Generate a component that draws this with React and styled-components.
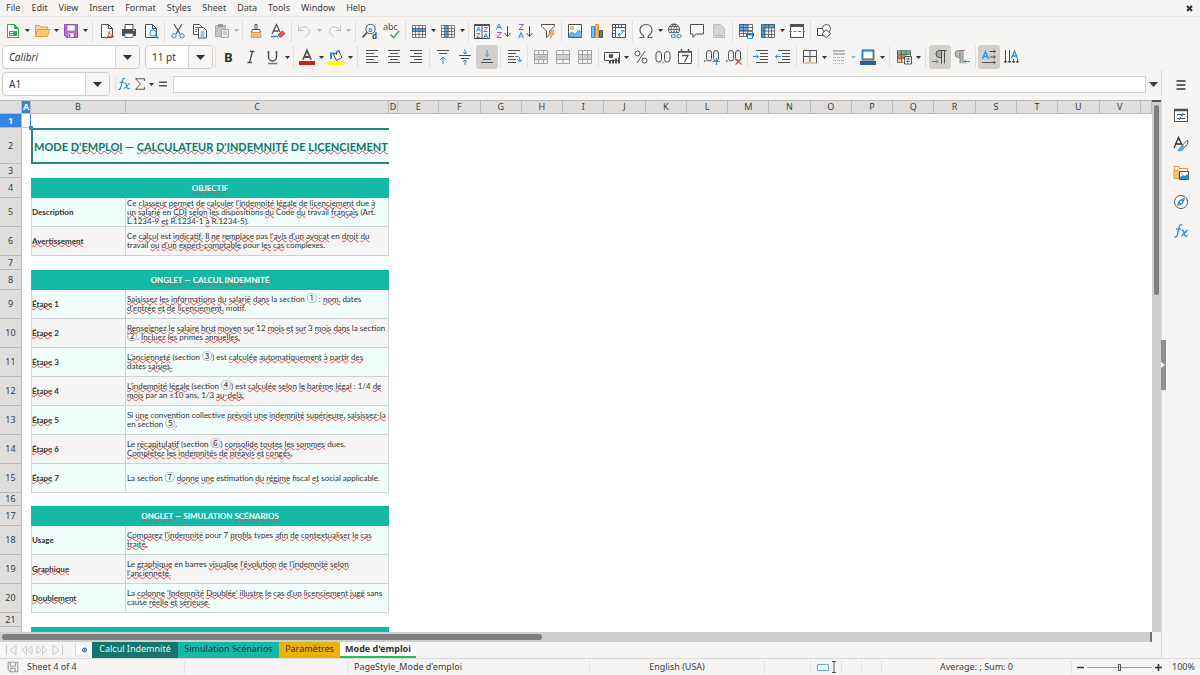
import React, { Fragment, useState } from "react";
import styled, { createGlobalStyle, css } from "styled-components";

const Colors = {
    chrome: "#f6f5f4",
    line: "#dcdad8",
    text: "#3a3d3e",
    ink: "#4d4f50",
    blue: "#2a8fd8",
    header: "#dfdedd",
    headerLine: "#bdbcbb",
    select: "#3584e4",
    teal: "#14b8a6",
    darkTeal: "#0f766e",
    mint: "#f0fdfa",
    grey: "#f5f5f5",
};

const K = Colors.ink;
const B = Colors.blue;

// ---------- data ----------
// words that start with ~ carry a spelling mark
const ROWS = [
    { n: 1, h: 14, kind: "empty" },
    { n: 2, h: 36, kind: "title", text: "MODE ~D'EMPLOI — ~CALCULATEUR ~D'INDEMNITÉ DE ~LICENCIEMENT" },
    { n: 3, h: 14, kind: "empty" },
    { n: 4, h: 20, kind: "section", text: "~OBJECTIF" },
    {
        n: 5,
        h: 29,
        label: "Description",
        text: "Ce ~classeur ~permet ~de ~calculer ~l'indemnité ~légale ~de ~licenciement due ~à\n~un ~salarié en ~CDI ~selon ~les dispositions ~du Code ~du travail ~français (Art.\nL.1234-9 ~et R.1234-1 ~à R.1234-5).",
    },
    {
        n: 6,
        h: 29,
        label: "~Avertissement",
        text: "Ce ~calcul est ~indicatif. ~Il ~ne ~remplace pas ~l'avis ~d'un ~avocat en ~droit ~du\ntravail ~ou ~d'un ~expert-comptable pour ~les ~cas complexes.",
    },
    { n: 7, h: 14, kind: "empty" },
    { n: 8, h: 20, kind: "section", text: "~ONGLET — ~CALCUL ~INDEMNITÉ" },
    {
        n: 9,
        h: 29,
        label: "~Étape 1",
        text: "~Saisissez ~les ~informations ~du ~salarié ~dans la section ① : ~nom, dates\n~d'entrée ~et ~de ~licenciement, motif.",
    },
    {
        n: 10,
        h: 29,
        label: "~Étape 2",
        text: "~Renseignez ~le ~salaire ~brut ~moyen ~sur 12 ~mois ~et ~sur 3 ~mois ~dans la section\n②. ~Incluez ~les primes ~annuelles.",
    },
    {
        n: 11,
        h: 29,
        label: "~Étape 3",
        text: "~L'ancienneté (section ③) est ~calculée ~automatiquement ~à ~partir ~des\ndates ~saisies.",
    },
    {
        n: 12,
        h: 29,
        label: "~Étape 4",
        text: "~L'indemnité ~légale (section ④) est ~calculée ~selon ~le ~barème ~légal : 1/4 ~de\n~mois par an ≤10 ans, 1/3 ~au-delà.",
    },
    {
        n: 13,
        h: 29,
        label: "~Étape 5",
        text: "Si ~une convention collective ~prévoit ~une ~indemnité ~supérieure, ~saisissez-la\nen section ⑤.",
    },
    {
        n: 14,
        h: 29,
        label: "~Étape 6",
        text: "Le ~récapitulatif (section ⑥) ~consolide ~toutes ~les ~sommes dues.\n~Complétez ~les ~indemnités ~de ~préavis ~et ~congés.",
    },
    {
        n: 15,
        h: 29,
        label: "~Étape 7",
        text: "La section ⑦ ~donne ~une estimation ~du ~régime fiscal ~et social applicable.",
    },
    { n: 16, h: 13, kind: "empty" },
    { n: 17, h: 20, kind: "section", text: "~ONGLET — SIMULATION ~SCÉNARIOS" },
    {
        n: 18,
        h: 29,
        label: "Usage",
        text: "~Comparez ~l'indemnité pour 7 ~profils types ~afin ~de ~contextualiser ~le ~cas\n~traité.",
    },
    {
        n: 19,
        h: 29,
        label: "~Graphique",
        text: "Le ~graphique en barres ~visualise ~l'évolution ~de ~l'indemnité ~selon\n~l'ancienneté.",
    },
    {
        n: 20,
        h: 29,
        label: "~Doublement",
        text: "La ~colonne ~'Indemnité ~Doublée' ~illustre ~le ~cas ~d'un ~licenciement ~jugé sans\ncause ~réelle ~et ~sérieuse.",
    },
    { n: 21, h: 14, kind: "empty" },
    { n: "", h: 20, kind: "section", text: "" },
];

const REST = "EFGHIJKLMNOPQRSTUV".split("");

const SHEETS = [
    { name: "Calcul Indemnité", bg: "#13766e", color: "#e8f5f3", width: 86 },
    { name: "Simulation Scénarios", bg: Colors.teal, color: "#12393a", width: 101 },
    { name: "Paramètres", bg: "#eab308", color: "#3d330f", width: 61 },
    { name: "Mode d'emploi", bg: "#ffffff", color: "#2e3436", width: 76 },
];

// ---------- icons ----------
const Page = ({ fill = "#fff", stroke = K }) => <path d="M2.5 1.5h7l4 4v9h-11zM9.500 1.500v4h4" fill={fill} stroke={stroke} />;
const Lines = ({ list, color = K }) => <path d={list.map(([x, y, w]) => `M${x} ${y}h${w}`).join("")} stroke={color} />;
const GridBox = ({ color = K }) => <path d="M1.500 2.500h13v12h-13zM1.500 5.500h13M1.500 8.500h13M1.500 11.500h13M4.500 2.500v12M8 2.500v12M11.500 2.500v12" stroke={color} strokeWidth='.7' fill="none" />;
const T = ({ x, y, s = 8, c = K, b, i, children }) => (
    <text x={x} y={y} fontSize={s} fill={c} stroke='none' fontWeight={b ? 700 : 400} fontStyle={i ? "italic" : "normal"} fontFamily="'Noto Sans', sans-serif">
        {children}
    </text>
);

const ICONS = {
    create: (
        <g>
            <path d="M2.500 1.500h7l4 4v9h-11z" fill='#fff' stroke='#35a854' />
            <path d="M9.500 1.500v4h4z" fill='#35a854' stroke='#35a854' />
            <path d="M4 8h8v5H4z" fill='#35a854' stroke='none' />
            <path d="M5 9.500h3M5 11.500h3" stroke='#fff' />
        </g>
    ),
    open: (
        <g>
            <path d="M1.500 13.500v-11h4l1 1.500h7v3" fill='#fbd9a0' stroke='#e39a3c' />
            <path d="M1.500 13.500l2-7h12l-2 7z" fill='#fbc877' stroke='#e39a3c' />
        </g>
    ),
    save: (
        <g>
            <path d="M1.500 1.500h13v13h-11l-2-2z" fill='#c06fd0' stroke='#9b4fb0' />
            <path d="M4 2h8v6H4z" fill='#fff' stroke='#9b4fb0' strokeWidth='.6' />
            <path d="M5 10h6v4.500H5z" fill='#fff' stroke='#9b4fb0' strokeWidth='.6' />
            <path d="M6.500 11v3" stroke='#9b4fb0' strokeWidth='1.500' />
        </g>
    ),
    pdf: (
        <g>
            <Page />
            <path d="M7 15c2-1 3.500-4 3-6.500 1 3 2.500 4.500 5 5-3-.6-6 0-8 1.500z" fill='#fff' stroke='#e0444f' />
        </g>
    ),
    print: (
        <g>
            <path d="M4 1.500h8v5H4z" fill='#fff' stroke={K} />
            <path d="M1 6h14v7H1z" fill={K} stroke='none' />
            <path d="M4 10.500h8v4H4z" fill='#fff' stroke={B} />
            <path d="M12 7.500h1.500" stroke='#fff' />
        </g>
    ),
    preview: (
        <g>
            <Page />
            <circle cx='10' cy='10' r='3.200' fill='#e3f1fb' stroke={B} />
            <path d="M12.500 12.500l3 3" stroke={B} strokeWidth='1.500' />
        </g>
    ),
    cut: (
        <g>
            <path d="M4 1l6 10M12 1L6 11" stroke={K} strokeWidth='1.200' />
            <circle cx='4' cy='12.800' r='2.200' fill='none' stroke={B} />
            <circle cx='12' cy='12.800' r='2.200' fill='none' stroke={B} />
        </g>
    ),
    copy: (
        <g>
            <path d="M1.500 1.500h6l2 2v8h-8z" fill='#fff' stroke={K} />
            <path d="M6.500 4.500h5l3 3v7.500h-8z" fill='#fff' stroke={K} />
            <path d="M3 4.500h3M3 6.500h2M3 8.500h2M8.500 9h4M8.500 11h4M8.500 13h4" stroke={B} />
        </g>
    ),
    paste: (
        <g>
            <path d="M1.500 2.500h10v11h-10z" fill='#c6c5c4' stroke='#aaa' />
            <path d="M4 1h5v3H4z" fill='#999' stroke='none' />
            <path d="M7.500 6.500h7v8h-7z" fill='#eee' stroke='#aaa' />
            <path d="M9 9h4M9 11h4" stroke='#aaa' />
        </g>
    ),
    brush: (
        <g>
            <path d="M7 1.500h2v5H7z" fill='none' stroke={K} />
            <path d="M4.500 6.500h7l1 3h-9z" fill='#fff' stroke={K} />
            <path d="M3.500 9.500h9l.5 5H3z" fill='#f9c480' stroke='#e39a3c' />
            <path d="M6 14v-2M9.500 14v-2" stroke='#e39a3c' />
        </g>
    ),
    clear: (
        <g>
            <path d="M2 11L6.500 1.500 10 9M3.500 8h5" fill='none' stroke={K} strokeWidth='1.300' />
            <path d="M1 13.500h7" stroke={B} strokeWidth='1.500' />
            <path d="M8 12l4.500-4 2.500 2.500-4.500 4z" fill='#e8505b' stroke='#c93440' />
        </g>
    ),
    undo: <path d="M1.500 2.500v5h5M1.500 7.500C4 3.500 9 2.500 11.500 5.500c2.500 3 0 6-3.500 8.500" fill='none' stroke='#c2c1c0' />,
    redo: <path d="M14.500 2.500v5h-5M14.500 7.500C12 3.500 7 2.500 4.500 5.500c-2.500 3 0 6 3.500 8.500" fill='none' stroke='#c2c1c0' />,
    find: (
        <g>
            <circle cx='8.500' cy='6' r='4.700' fill='#fff' stroke={K} />
            <path d="M5 9.500l-4.500 5" stroke={K} strokeWidth='1.800' />
            <T x={6} y={8.5} s={7} c={B} b>a</T>
            <T x={10} y={15.5} s={8} b>d</T>
        </g>
    ),
    spell: (
        <g>
            <T x={-1} y={7} s={9}>abc</T>
            <path d="M6.500 11.500l3 3L15 8" fill='none' stroke='#37b26a' strokeWidth='1.700' />
        </g>
    ),
    row: (
        <g>
            <path d="M1 5h14v4H1z" fill='#5aaee8' stroke='none' />
            <GridBox />
        </g>
    ),
    column: (
        <g>
            <path d="M4.500 2h4v13h-4z" fill='#5aaee8' stroke='none' />
            <GridBox />
        </g>
    ),
    sort: (
        <g>
            <path d="M.5 1.500h15v14H.5zM8 1.500v14" fill='#fff' stroke={K} />
            <path d="M.5 2h15" stroke={K} strokeWidth='2' />
            <path d="M2.500 8.500l2-4.500 2 4.500M3.200 7h2.600M9.800 15l2-4.500 2 4.500M10.500 13.500h2.600" fill='none' stroke={B} />
            <path d="M2.500 10.500h3.500l-3.500 4h3.500M10 4.500h3.500l-3.500 4h3.500" fill='none' stroke='#b14ec4' />
        </g>
    ),
    sortAsc: (
        <g>
            <path d="M.5 6.500L3 1l2.500 5.500M1.500 4.500h3" fill='none' stroke={B} />
            <path d="M1 9.500h4.500L1 14.500h4.500" fill='none' stroke='#b14ec4' />
            <path d="M11.500 3v10M8.500 10l3 3.500 3-3.500" fill='none' stroke={K} />
        </g>
    ),
    sortDesc: (
        <g>
            <path d="M1 1.500h4.500L1 6.500h4.500" fill='none' stroke='#b14ec4' />
            <path d="M.5 15L3 9.500 5.500 15M1.500 13h3" fill='none' stroke={B} />
            <path d="M11.500 3v10M8.500 10l3 3.500 3-3.500" fill='none' stroke={K} />
        </g>
    ),
    filter: (
        <g>
            <path d="M1.500 1.500h13v1.500L9.500 8v4l-3 2.500V8l-5-5z" fill='#fff' stroke={K} />
            <path d="M12 7l-3 4.500h2.500L10 15.500l4.500-5.500h-2.500l2-3z" fill='#f9b25c' stroke='#ea9130' strokeWidth='.7' />
        </g>
    ),
    image: (
        <g>
            <path d="M1.500 1.500h13v13h-13z" fill='#fff' stroke={K} />
            <path d="M2 11l3-2 3 2 4-4 2.500 3v4H2z" fill='#6ab7ea' stroke={B} strokeWidth='.7' />
            <circle cx='5' cy='5' r='1.500' fill='#f9b25c' stroke='#ea9130' strokeWidth='.6' />
        </g>
    ),
    chart: (
        <g>
            <path d="M2.500 3.500h3v11h-3z" fill='#7fc0ee' stroke={B} />
            <path d="M6.500 1.500h3v13h-3z" fill='#f9b25c' stroke='#ea9130' />
            <path d="M10.500 7.500h3v7h-3z" fill='#777' stroke={K} />
        </g>
    ),
    pivot: (
        <g>
            <path d="M1.500 1.500h13v13h-13zM1.500 4.500h13M4.500 1.500v13" fill='#fff' stroke={K} />
            <path d="M7.500 1.500v3M10.500 1.500v3M1.500 7.500h3M1.500 10.500h3" stroke={K} strokeWidth='.8' />
            <path d="M7 12c3 0 5-2 5-5M7 12l2-2M7 12l2 1.500M12 7l-2 1.500M12 7l1.500 2" fill='none' stroke={B} />
        </g>
    ),
    omega: <path d="M1.500 14.500h4.200v-1.700C3.500 11.500 2 9.500 2 7c0-3.300 2.600-5.500 6-5.500S14 3.700 14 7c0 2.500-1.500 4.500-3.700 5.800v1.700h4.200" fill='none' stroke={K} strokeWidth='1.100' />,
    link: (
        <g>
            <circle cx='7' cy='6.500' r='5.500' fill='#fff' stroke={K} />
            <path d="M1.500 6.500h11M7 1v11M7 1C3 4 3 9 7 12M7 1c4 3 4 8 0 11M2.500 3.500h9M2.500 9.500h9" fill='none' stroke={K} strokeWidth='.8' />
            <path d="M3 10h12v6H3z" fill={Colors.chrome} stroke='none' />
            <path d="M8.500 11.500H5.800a1.500 1.500 0 000 3h2.700M10 11.500h2.700a1.500 1.500 0 010 3H10M7 13h4.500" fill='none' stroke={B} />
        </g>
    ),
    comment: <path d="M1.500 1.500h13v9.500H7l-3 3.500V11H1.500z" fill='#fff' stroke={K} />,
    footer: (
        <g>
            <path d="M2.500 1.500h7l4 4v9h-11z" fill='#d5d4d3' stroke='#c0bfbe' />
            <path d="M4.500 12.500h7" stroke='#aaa' />
        </g>
    ),
    printArea: (
        <g>
            <path d="M1 1h9v8H1z" fill='#5aaee8' stroke='none' />
            <path d="M1.500 1.500h13v12h-13zM1.500 4.500h13M1.500 7.500h13M1.500 10.500h13M5.500 1.500v12M10 1.500v12" fill='none' stroke={K} strokeWidth='.8' />
            <path d="M8 10h8v3.500H8z" fill={K} stroke='none' />
            <path d="M9.500 8.500h5v2h-5zM9.500 12h5v3.500h-5z" fill='#fff' stroke={B} />
        </g>
    ),
    freeze: (
        <g>
            <path d="M1 1h4v14H1zM1 1h14v4H1z" fill='#4aa3e2' stroke='none' />
            <path d="M1.500 1.500h13v13h-13zM1.500 5h13M1.500 8h13M1.500 11.500h13M5 1.500v13M8.500 1.500v13M11.500 5v9.500" fill='none' stroke={K} strokeWidth='.8' />
        </g>
    ),
    split: (
        <g>
            <path d="M1.500 2.500h13v12h-13z" fill='#fff' stroke={K} />
            <path d="M1 2.500h14" stroke={K} strokeWidth='3' />
            <path d="M0 8.500h16" stroke={B} strokeDasharray='3 1.500' />
        </g>
    ),
    shapes: (
        <g>
            <path d="M1.500 5.500h7v7h-7z" fill='#fff' stroke={K} />
            <circle cx='10.500' cy='5.500' r='4' fill='#fff' stroke={K} />
            <path d="M10 6.500l4.500 4-4 4.500-4.500-4z" fill='#fff' stroke={K} />
        </g>
    ),
    bold: <T x={3} y={13} s={13} c='#2e3436' b>B</T>,
    italic: <path d="M7 2.500h4.500M4.500 13.500H9M9.500 2.500l-3 11" stroke={K} strokeWidth='1.300' />,
    underline: (
        <g>
            <path d="M3.500 2v6a4 4 0 008 0V2" fill='none' stroke={K} strokeWidth='1.500' />
            <path d="M3 14.500h9.500" stroke={B} strokeWidth='1.500' />
        </g>
    ),
    fontColor: (
        <g>
            <path d="M4 10.500L8 1.500l4 9M5.500 8h5" fill='none' stroke={K} strokeWidth='1.800' />
            <path d="M0 12h16v4H0z" fill='#c9211e' stroke='none' />
        </g>
    ),
    fill: (
        <g>
            <path d="M5.500 5.500l5.500-3 3 6-5.500 3z" fill='#fff' stroke={K} />
            <path d="M8.500 6c-1-5 3-6 3.500-3" fill='none' stroke={K} />
            <path d="M3 10V4.500h4" fill='none' stroke={B} strokeWidth='2' />
            <path d="M0 12h16v4H0z" fill='#ffff00' stroke='none' />
        </g>
    ),
    left: <Lines list={[[2, 1.5, 12], [2, 4.5, 8], [2, 7.5, 12], [2, 10.5, 8], [2, 13.5, 12]]} />,
    center: <Lines list={[[2, 1.5, 12], [4, 4.5, 8], [2, 7.5, 12], [4, 10.5, 8], [2, 13.5, 12]]} />,
    right: <Lines list={[[2, 1.5, 12], [6, 4.5, 8], [2, 7.5, 12], [6, 10.5, 8], [2, 13.5, 12]]} />,
    top: (
        <g>
            <Lines list={[[2, 1.5, 12], [4, 4.5, 8]]} />
            <path d="M8 15V8M5.500 10.500L8 8l2.500 2.500" fill='none' stroke={B} />
        </g>
    ),
    middle: (
        <g>
            <Lines list={[[2, 6.5, 12], [4, 9.5, 8]]} />
            <path d="M8 0v5M6 3l2 2 2-2M8 16v-5M6 13l2-2 2 2" fill='none' stroke={B} />
        </g>
    ),
    bottom: (
        <g>
            <Lines list={[[2, 13.5, 12], [4, 10.5, 8]]} />
            <path d="M8 1v6.500M6 5.500l2 2 2-2" fill='none' stroke={B} />
        </g>
    ),
    wrap: (
        <g>
            <Lines list={[[2, 1.5, 12], [2, 4.5, 8], [2, 7.5, 6], [2, 10.5, 8], [2, 13.5, 8]]} />
            <path d="M9 7.500h3.500q1.500 0 1.500 5M11.500 10.500l2.500 2.500 2-2.500" fill='none' stroke={B} />
        </g>
    ),
    merge: (
        <g>
            <path d="M1 5h14v6H1z" fill='#d2d1d0' stroke='none' />
            <path d="M1.500 1.500h13v13h-13zM1.500 5.500h13M1.500 10.500h13M5.500 1.500v4M10.500 1.500v4M5.500 10.500v4M10.500 10.500v4M4 8h8" fill='none' stroke='#a5a4a3' />
        </g>
    ),
    mergeCells: (
        <g>
            <path d="M1 5h14v6H1z" fill='#d2d1d0' stroke='none' />
            <path d="M1.500 1.500h13v13h-13zM1.500 5.500h13M1.500 10.500h13M8 1.500v4M8 10.500v4" fill='none' stroke='#a5a4a3' />
        </g>
    ),
    splitCells: (
        <g>
            <path d="M1 5h14v6H1z" fill='#d2d1d0' stroke='none' />
            <path d="M1.500 1.500h13v13h-13zM1.500 5.500h13M1.500 10.500h13M5.500 1.500v13M10.500 1.500v13" fill='none' stroke='#a5a4a3' />
        </g>
    ),
    currency: (
        <g>
            <path d="M.5 3.500h15v8H.5z" fill='#fff' stroke={K} />
            <circle cx='7' cy='7' r='2.300' fill={K} stroke='none' />
            <path d="M6 14.500v-3M9 14.500v-4M12 14.500v-5M15 14.500v-6" stroke={K} strokeWidth='2' />
        </g>
    ),
    percent: (
        <g>
            <circle cx='4.500' cy='4.500' r='2.500' fill='none' stroke={K} />
            <circle cx='11.500' cy='11.500' r='2.500' fill='none' stroke={K} />
            <path d="M12 2L4 14" stroke={K} />
        </g>
    ),
    number: (
        <g>
            <rect x='1' y='2.500' width='5.500' height='10.500' rx='2.700' fill='none' stroke={K} />
            <rect x='9.500' y='2.500' width='5.500' height='10.500' rx='2.700' fill='none' stroke={K} />
            <path d="M7.500 13.500h1" stroke={K} strokeWidth='1.500' />
        </g>
    ),
    date: (
        <g>
            <path d="M1.500 2.500h13v12h-13z" fill='#fff' stroke={K} />
            <path d="M1 3h14M4.500 0v3M11.500 0v3" stroke={K} strokeWidth='1.500' />
            <path d="M5 6.500h6L7.500 13" fill='none' stroke={K} strokeWidth='1.300' />
        </g>
    ),
    addDecimal: (
        <g>
            <rect x='2.500' y='1.500' width='5' height='10.500' rx='2.500' fill='none' stroke={K} />
            <rect x='9.500' y='1.500' width='5' height='10.500' rx='2.500' fill='none' stroke={K} />
            <path d="M0 12h1.500" stroke={K} strokeWidth='1.500' />
            <path d="M9 12.500h7M12.500 9v7" stroke={B} strokeWidth='1.200' />
        </g>
    ),
    delDecimal: (
        <g>
            <rect x='2.500' y='1.500' width='5' height='10.500' rx='2.500' fill='none' stroke={K} />
            <rect x='9.500' y='1.500' width='5' height='10.500' rx='2.500' fill='none' stroke={K} />
            <path d="M0 12h1.500" stroke={K} strokeWidth='1.500' />
            <path d="M9.500 9.500l6 6M15.500 9.500l-6 6" stroke='#e0444f' strokeWidth='1.200' />
        </g>
    ),
    indent: (
        <g>
            <Lines list={[[3, 1.5, 12], [7, 4.5, 8], [7, 7.5, 8], [7, 10.5, 8], [3, 13.5, 12]]} />
            <path d="M0 7.500h5.500M3.500 5.500l2 2-2 2" fill='none' stroke={B} />
        </g>
    ),
    outdent: (
        <g>
            <Lines list={[[3, 1.5, 12], [7, 4.5, 8], [7, 7.5, 8], [7, 10.5, 8], [3, 13.5, 12]]} />
            <path d="M.5 7.500H6M2.500 5.500l-2 2 2 2" fill='none' stroke={B} />
        </g>
    ),
    borders: (
        <g>
            <path d="M1.500 14V1.500h13V14M8 1.500v12M1.500 7.500h13" fill='none' stroke={K} />
            <path d="M1 14h14" stroke='#ea9a4a' />
        </g>
    ),
    borderStyle: (
        <g>
            <path d="M2 2h12M2 5h12" stroke='#a5a4a3' strokeWidth='1.500' />
            <path d="M2 8.500h12M2 11.500h12" stroke='#b5b4b3' strokeDasharray='3 1' />
            <path d="M2 14.500h12" stroke='#b5b4b3' strokeDasharray='1 1' />
        </g>
    ),
    borderColor: (
        <g>
            <path d="M2.500 1.500h11v9h-11z" fill='#fff' stroke={K} strokeWidth='1.800' />
            <path d="M2.500 1.500h11v9h-11z" stroke={B} />
            <path d="M0 12h16v4H0z" fill='#2a6099' stroke='none' />
        </g>
    ),
    conditional: (
        <g>
            <path d="M1 2h14v3.500H1z" fill='#5cc47c' stroke='none' />
            <path d="M1 5.500h8v3.500H1z" fill='#ef6a62' stroke='none' />
            <path d="M1 9h6v4H1z" fill='#f9c480' stroke='none' />
            <path d="M14.500 7V1.500h-13v12h6M1.500 5.500h13M1.500 9.500h7M5.500 1.500v12M10 1.500v6" fill='none' stroke={K} strokeWidth='.7' />
            <path d="M8.500 7.500h7v7.500h-7z" fill='#fff' stroke={K} />
            <path d="M10 10h4M10 12.500h4M13 8.500l-2 5.500" stroke={K} strokeWidth='.8' />
        </g>
    ),
    ltr: (
        <g>
            <path d="M9 1.500H7.500a3.500 3.500 0 000 7H9z" fill='#aaa' stroke='none' />
            <path d="M14.500 1.500H7.500a3.500 3.500 0 000 7h2M9.500 1.500v13M12.500 1.500v13" fill='none' stroke={K} />
            <path d="M0 12.500h6M4 10.500l2 2-2 2" fill='none' stroke={B} />
        </g>
    ),
    rtl: (
        <g>
            <path d="M6 1.500H4.500a3.500 3.500 0 000 7H6zM6 2h3v12H6z" fill='#bbb' stroke='none' />
            <path d="M11 1.500H4.500a3.500 3.500 0 000 7H6M6 1.500v13M9 1.500v13" fill='none' stroke='#888' />
            <path d="M10 12.500h6M12 10.500l-2 2 2 2" fill='none' stroke={B} />
        </g>
    ),
    textHorizontal: (
        <g>
            <path d="M1.500 10L4.500 2.500 7.500 10M2.500 7.500h4" fill='none' stroke={B} strokeWidth='1.300' />
            <path d="M8.500 2.500H14M8.500 8H14M1 13.500h13M12.500 1l2 1.500-2 1.500M12.500 6.500l2 1.500-2 1.500M12.500 12l2 1.500-2 1.500" fill='none' stroke={K} />
        </g>
    ),
    textVertical: (
        <g>
            <path d="M8.500 9.500L11.500 2l3 7.500M9.500 7h4" fill='none' stroke={B} strokeWidth='1.300' />
            <path d="M2.500 1v12.500M6.500 1v12.500M10.500 10v3.500M14.500 10v3.500M1 12l1.500 2L4 12M5 12l1.500 2L8 12M9 12l1.500 2 1.500-2M13 12l1.500 2 1.500-2" fill='none' stroke={K} />
        </g>
    ),
    fx: (
        <g>
            <path d="M9 2.200C7.800 1 6.600 1.800 6.200 3.800L4.300 12c-.4 2-1.500 2.600-2.800 1.700M3 6.200h5" fill='none' stroke={B} strokeWidth='1.300' />
            <path d="M8.500 7.500c2-1 2 .5 2.500 3s1.500 3.500 3.500 2M15 7.500c-2-.5-5.500 6-7 5.500" fill='none' stroke={B} strokeWidth='1.300' />
        </g>
    ),
    sigma: <path d="M13 4.500v-2.500H3l5.500 6L3 14h10v-2.500" fill='none' stroke={K} strokeWidth='1.100' />,
    equals: <path d="M3.500 6h9M3.500 10h9" stroke={K} strokeWidth='1.800' />,
    menu: <path d="M3.500 4h9M3.500 8h9M3.500 12h9" stroke='#2e3436' strokeWidth='1.500' />,
    properties: (
        <g>
            <path d="M1.500 2.500h13v12h-13z" fill='#fff' stroke={K} />
            <path d="M1 3h14" stroke={K} strokeWidth='2.500' />
            <path d="M4 7.500h8M4 11.500h8" stroke={K} />
            <path d="M10 6L8 9h2M6 13l2-3.500" fill='none' stroke={B} />
        </g>
    ),
    styles: (
        <g>
            <path d="M1 12L5.500 1.500 9 9M2.500 8h6" fill='none' stroke='#2e3436' strokeWidth='1.400' />
            <path d="M15 4.500c-2 .5-4.500 3-5.500 5.500l1.500 1.500c2.500-1.500 4.500-4.500 4-7z" fill='#fff' stroke={K} />
            <path d="M9 10.500c-2 0-2 2.500-4 4 2.500.5 5.500 0 5.500-2.500z" fill='#6ab7ea' stroke={B} />
        </g>
    ),
    gallery: (
        <g>
            <path d="M1.500 12.500v-11h4l1 2h8v3" fill='#fff' stroke='#e39a3c' strokeWidth='1.200' />
            <path d="M1 5.500h5v8H1z" fill='#fbc877' stroke='#e39a3c' />
            <path d="M6.500 6.500h9v8h-9z" fill='#fff' stroke={K} />
            <path d="M7 12l3-2 2 1 2-2 1.500 2v3H7z" fill={B} stroke='none' />
            <circle cx='9' cy='8.500' r='.9' fill='#f9b25c' stroke='none' />
        </g>
    ),
    navigator: (
        <g>
            <circle cx='8' cy='8' r='6.500' fill='#fff' stroke={K} />
            <path d="M11.500 4.500L9.500 9.500l-5 2 2-5z" fill={B} stroke={B} />
            <circle cx='8' cy='8' r='1.200' fill='#fff' stroke='none' />
        </g>
    ),
    disk: (
        <g>
            <path d="M2.500 2.500h11v11h-9l-2-2z" fill='none' stroke='#8a8988' />
            <path d="M5 3v4h6V3M5.500 13.500v-4h5v4" fill='none' stroke='#8a8988' />
        </g>
    ),
};

const Icon = ({ name, size = 16 }) => (
    <svg width={size} height={size} viewBox='0 0 16 16' fill='none' aria-hidden='true' overflow='visible'>
        {ICONS[name]}
    </svg>
);

const Caret = ({ big }) => (
    <svg width={big ? 9 : 5} height={big ? 5 : 3} viewBox='0 0 10 6' preserveAspectRatio='none' aria-hidden='true'>
        <path d='M0 0h10L5 6z' fill='currentColor' />
    </svg>
);

// "|" small gap, "||" wider gap, name+ has an arrow, name! is switched on, name- is disabled
const STANDARD =
    "create+ open+ save+ || pdf print preview | cut copy paste+- | brush clear | undo+- redo+- || find spell | row+ column+ | sort sortAsc sortDesc filter | image chart pivot | omega+ link comment footer- | printArea freeze+ split | shapes";
const FORMATTING =
    "| bold italic underline+ | fontColor+ fill+ || left center right | top middle bottom! | wrap | merge- mergeCells- splitCells- | currency+ percent number date | addDecimal delDecimal | indent outdent | borders+ borderStyle+- borderColor+ || conditional+ || ltr! rtl | textHorizontal! textVertical";

const Tools = ({ spec }) =>
    spec.split(" ").map((item, i) => {
        if (item[0] === "|") return <Separator key={i} $wide={item === "||"} />;
        const name = item.replace(/[+!-]/g, "");
        const off = item.includes("-");
        return (
            <Fragment key={i}>
                <ToolButton $on={item.includes("!")} disabled={off} aria-label={name}>
                    <Icon name={name} />
                </ToolButton>
                {item.includes("+") && (
                    <ArrowButton disabled={off} aria-label={`${name} options`}>
                        <Caret />
                    </ArrowButton>
                )}
            </Fragment>
        );
    });

const Combo = ({ label, value, width, italic }) => {
    const [text, setText] = useState(value);
    return (
        <ComboBox $width={width} $italic={italic}>
            <input aria-label={label} value={text} onChange={(e) => setText(e.target.value)} />
            <button aria-label={`${label} list`}>
                <Caret big />
            </button>
        </ComboBox>
    );
};

const Marked = ({ text }) =>
    text.split(/(\s|[①-⑦])/).map((word, i) => {
        if (word[0] === "~") return <Typo key={i}>{word.slice(1)}</Typo>;
        if (/[①-⑦]/.test(word)) return <Circled key={i}>{word}</Circled>;
        return <Fragment key={i}>{word}</Fragment>;
    });

const SheetRow = ({ row, band }) => {
    const first = row.n === 1;
    return (
        <Row $height={row.h}>
            <RowHead scope='row' $active={first}>
                {row.n}
            </RowHead>
            <td>{first && <Cursor />}</td>
            {row.kind === "title" && (
                <TitleCell colSpan={2}>
                    <Marked text={row.text} />
                </TitleCell>
            )}
            {row.kind === "section" && (
                <SectionCell colSpan={2}>
                    <Marked text={row.text} />
                </SectionCell>
            )}
            {row.kind === "empty" && <td colSpan={2} />}
            {!row.kind && (
                <Fragment>
                    <LabelCell $band={band}>
                        <Marked text={row.label} />
                    </LabelCell>
                    <BodyCell $band={band}>
                        <Marked text={row.text} />
                    </BodyCell>
                </Fragment>
            )}
            <td colSpan={20} />
        </Row>
    );
};

const App = () => {
    const [sheet, setSheet] = useState(3);
    const [zoom, setZoom] = useState(50);
    let band = 0;

    return (
        <Window>
            <GlobalStyle />
            <MenuBar>
                {["File", "Edit", "View", "Insert", "Format", "Styles", "Sheet", "Data", "Tools", "Window", "Help"].map((m) => (
                    <button key={m}>{m}</button>
                ))}
                <CloseButton aria-label='Close document'>
                    <svg width='7' height='7' viewBox='0 0 7 7' aria-hidden='true'>
                        <path d='M1 1l5 5M6 1L1 6' stroke='#2e3436' strokeWidth='2' />
                    </svg>
                </CloseButton>
            </MenuBar>
            <Toolbar>
                <Tools spec={STANDARD} />
            </Toolbar>
            <Toolbar>
                <Combo label='Font name' value='Calibri' width={138} italic />
                <Combo label='Font size' value='11 pt' width={68} />
                <Tools spec={FORMATTING} />
            </Toolbar>
            <Main>
                <Document>
                    <FormulaBar>
                        <Combo label='Name box' value='A1' width={108} />
                        <FormulaTools>
                            <SmallTool aria-label='Function wizard'>
                                <Icon name='fx' size={14} />
                            </SmallTool>
                            <SmallTool aria-label='Select function'>
                                <Icon name='sigma' size={14} />
                            </SmallTool>
                            <ArrowButton aria-label='Function list'>
                                <Caret />
                            </ArrowButton>
                            <SmallTool aria-label='Formula'>
                                <Icon name='equals' size={14} />
                            </SmallTool>
                        </FormulaTools>
                        <FormulaInput aria-label='Input line' />
                        <ExpandButton aria-label='Expand formula bar'>
                            <Caret big />
                        </ExpandButton>
                    </FormulaBar>
                    <SheetArea>
                        <Viewport>
                            <Sheet>
                                <colgroup>
                                    <Col $width={22} />
                                    <Col $width={9} />
                                    <Col $width={95} />
                                    <Col $width={263} />
                                    <Col $width={9} />
                                    {REST.map((c) => (
                                        <col key={c} />
                                    ))}
                                    <Col $width={11} />
                                </colgroup>
                                <thead>
                                    <tr>
                                        <ColHead />
                                        <ColHead scope='col' $active>
                                            A
                                        </ColHead>
                                        {["B", "C", "D", ...REST].map((c) => (
                                            <ColHead scope='col' key={c}>
                                                {c}
                                            </ColHead>
                                        ))}
                                        <ColHead />
                                    </tr>
                                </thead>
                                <tbody>
                                    {ROWS.map((row) => {
                                        band = row.kind ? 0 : band + 1;
                                        return <SheetRow key={row.n} row={row} band={band % 2} />;
                                    })}
                                </tbody>
                            </Sheet>
                        </Viewport>
                        <VerticalScroll>
                            <i />
                        </VerticalScroll>
                    </SheetArea>
                    <HorizontalScroll>
                        <i />
                    </HorizontalScroll>
                    <TabBar>
                        <TabNav>
                            {["M1.500 2v10M11 2L5 7l6 5z", "M6.500 3L2 7l4.500 4zM12 3L7.500 7l4.500 4z", "M2 3l4.500 4L2 11zM7.500 3L12 7l-4.500 4z", "M12.500 2v10M3 2l6 5-6 5z"].map((d) => (
                                <button key={d} aria-label='Scroll sheets'>
                                    <svg width='14' height='14' viewBox='0 0 14 14' aria-hidden='true'>
                                        <path d={d} fill='none' stroke='#cbcac9' />
                                    </svg>
                                </button>
                            ))}
                        </TabNav>
                        <AddSheet aria-label='Add sheet'>
                            <svg width='16' height='14' viewBox='0 0 16 14' aria-hidden='true'>
                                <path d='M.5 0h8l3 3v10H.5z' fill='#fff' stroke='#ddd' />
                                <circle cx='9.500' cy='7' r='2' fill='#fff' stroke='#3465a4' />
                                <path d='M9.500 5v4M7.500 7h4' stroke='#3465a4' strokeWidth='.7' />
                            </svg>
                        </AddSheet>
                        {SHEETS.map((s, i) => (
                            <SheetTab key={s.name} $sheet={s} $active={i === sheet} onClick={() => setSheet(i)}>
                                {s.name}
                            </SheetTab>
                        ))}
                    </TabBar>
                </Document>
                <Sidebar>
                    <Grip aria-label='Hide sidebar'>
                        <svg width='4' height='6' viewBox='0 0 4 6' aria-hidden='true'>
                            <path d='M0 0l4 3-4 3z' fill='#fff' />
                        </svg>
                    </Grip>
                    {["menu", "properties", "styles", "gallery", "navigator", "fx"].map((name) => (
                        <SideButton key={name} aria-label={name}>
                            <Icon name={name} />
                        </SideButton>
                    ))}
                </Sidebar>
            </Main>
            <StatusBar>
                <Status $width={185}>
                    <Icon name='disk' size={14} />
                    <span>Sheet 4 of 4</span>
                </Status>
                <Status $width={163} />
                <Status $width={242}>PageStyle_Mode d'emploi</Status>
                <Status $width={175} $center>
                    English (USA)
                </Status>
                <Status $width={46} />
                <Status $width={31}>
                    <svg width='20' height='12' viewBox='0 0 20 12' aria-hidden='true'>
                        <path d='M.5 3.500h11v6H.5z' fill='#eef7fd' stroke='#6aaedb' />
                        <path d='M15 .5h4M15 11.500h4M17 .5v11' stroke='#555' />
                    </svg>
                </Status>
                <Status $width={20} />
                <Status $width={20} />
                <Status $grow $center>
                    Average: ; Sum: 0
                </Status>
                <Zoom>
                    <button aria-label='Zoom out'>
                        <svg width='7' height='7' viewBox='0 0 7 7' aria-hidden='true'>
                            <path d='M0 3.500h7' stroke='#2e3436' strokeWidth='1.500' />
                        </svg>
                    </button>
                    <input type='range' aria-label='Zoom' value={zoom} onChange={(e) => setZoom(Number(e.target.value))} />
                    <button aria-label='Zoom in'>
                        <svg width='7' height='7' viewBox='0 0 7 7' aria-hidden='true'>
                            <path d='M0 3.500h7M3.500 0v7' stroke='#2e3436' strokeWidth='1.500' />
                        </svg>
                    </button>
                    <span>100%</span>
                </Zoom>
            </StatusBar>
        </Window>
    );
};

const GlobalStyle = createGlobalStyle`
    * {
        box-sizing: border-box;
    }
    body {
        margin: 0;
        background-color: ${Colors.chrome};
        color: ${Colors.text};
        font-family: "Noto Sans", sans-serif;
        font-size: 9px;
        overflow: hidden;
    }
    button, input {
        border: none;
        padding: 0;
        margin: 0;
        background: none;
        font: inherit;
        color: inherit;
    }
    svg {
        flex-shrink: 0;
    }
`;
const Window = styled.div`
    display: flex;
    flex-direction: column;
    height: 100vh;
`;
const MenuBar = styled.nav`
    display: flex;
    align-items: center;
    gap: 11px;
    height: 17px;
    padding: 0 7px 0 6px;
    border-bottom: 1px solid #eae8e6;
    button {
        line-height: 14px;
    }
`;
const CloseButton = styled.button`
    margin-left: auto;
    display: flex;
`;
const Toolbar = styled.div`
    display: flex;
    align-items: center;
    height: 27px;
    padding: 0 2px;
    & + & {
        height: 26px;
    }
`;
const ToolButton = styled.button`
    display: flex;
    align-items: center;
    justify-content: center;
    flex-shrink: 0;
    width: 22px;
    height: 24px;
    border-radius: 3px;
    background-color: ${(p) => (p.$on ? "#d3d0cc" : "transparent")};
`;
const SmallTool = styled(ToolButton)`
    width: 16px;
`;
const ArrowButton = styled.button`
    display: flex;
    align-items: center;
    justify-content: center;
    flex-shrink: 0;
    width: 7px;
    height: 24px;
    color: #2e3436;
    &:disabled {
        color: #b5b4b3;
    }
`;
const Separator = styled.span`
    flex-shrink: 0;
    width: 1px;
    height: 22px;
    margin: ${(p) => (p.$wide ? "0 3px" : "0 2px")};
    background-color: #e3e1df;
`;
const ComboBox = styled.div`
    display: flex;
    flex-shrink: 0;
    width: ${(p) => p.$width}px;
    height: 24px;
    margin-right: 5px;
    border: 1px solid #cfccc9;
    border-radius: 4px;
    background-color: #fff;
    overflow: hidden;
    & + & {
        margin-right: 0;
    }
    input {
        flex: 1;
        min-width: 0;
        padding-left: 6px;
        color: #2e3436;
        font-size: 10px;
        font-style: ${(p) => (p.$italic ? "italic" : "normal")};
    }
    button {
        display: flex;
        align-items: center;
        justify-content: center;
        width: 24px;
        border-left: 1px solid #d8d5d2;
        background-color: ${Colors.chrome};
        color: #2e3436;
    }
`;
const Main = styled.main`
    display: flex;
    flex: 1;
    min-height: 0;
`;
const Document = styled.section`
    display: flex;
    flex-direction: column;
    flex: 1;
    min-width: 0;
    border-right: 1px solid ${Colors.line};
`;
const FormulaBar = styled.div`
    display: flex;
    align-items: center;
    flex-shrink: 0;
    height: 30px;
    padding: 0 0 2px 2px;
`;
const FormulaTools = styled.div`
    display: flex;
    align-items: center;
    height: 16px;
    margin-right: 2px;
    border-left: 1px solid #e3e1df;
`;
const FormulaInput = styled.input`
    flex: 1;
    min-width: 0;
    height: 17px;
    border: 1px solid #d4d2d0;
    background-color: #fff;
`;
const ExpandButton = styled.button`
    display: flex;
    justify-content: center;
    width: 15px;
`;
const SheetArea = styled.div`
    display: flex;
    flex: 1;
    min-height: 0;
`;
const Viewport = styled.div`
    flex: 1;
    min-width: 0;
    overflow: hidden;
    background-color: #fff;
`;
const Sheet = styled.table`
    width: 100%;
    table-layout: fixed;
    border-collapse: separate;
    border-spacing: 0;
    font-family: Lato, "DejaVu Sans", sans-serif;
    td,
    th {
        padding: 0;
    }
`;
const Col = styled.col`
    width: ${(p) => p.$width}px;
`;
const activeHead = css`
    background-color: ${Colors.select};
    color: #fff;
    font-weight: 700;
`;
const ColHead = styled.th`
    height: 14px;
    border-top: 1px solid ${Colors.headerLine};
    border-right: 1px solid ${Colors.headerLine};
    border-bottom: 1px solid ${Colors.headerLine};
    background-color: ${Colors.header};
    font-family: "Noto Sans", sans-serif;
    font-size: 9px;
    font-weight: 400;
    line-height: 12px;
    ${(p) => p.$active && activeHead}
`;
const Row = styled.tr`
    height: ${(p) => p.$height}px;
`;
const RowHead = styled.th`
    border-right: 1px solid ${Colors.headerLine};
    border-bottom: 1px solid ${Colors.headerLine};
    background-color: ${Colors.header};
    font-family: "Noto Sans", sans-serif;
    font-size: 9px;
    font-weight: 400;
    line-height: 12px;
    ${(p) => p.$active && activeHead}
`;
const Cursor = styled.div`
    position: relative;
    height: 14px;
    border-right: 1px solid ${Colors.select};
    border-bottom: 1px solid #b4cfef;
    &::after {
        content: "";
        position: absolute;
        right: -3px;
        bottom: -3px;
        width: 4px;
        height: 4px;
        background-color: ${Colors.select};
    }
`;
const TitleCell = styled.td`
    border: 2px solid #2d867d;
    border-right: none;
    background-color: ${Colors.mint};
    color: ${Colors.darkTeal};
    font-size: 11px;
    font-weight: 700;
    line-height: 15px;
    text-align: center;
    white-space: nowrap;
`;
const SectionCell = styled.td`
    background-color: ${Colors.teal};
    color: #fff;
    font-size: 8px;
    font-weight: 700;
    line-height: 10px;
    text-align: center;
`;
const BodyCell = styled.td`
    && {
        padding-left: 1px;
    }
    border-right: 1px solid #d0d3d3;
    border-bottom: 1px solid #d0d3d3;
    background-color: ${(p) => (p.$band ? Colors.mint : Colors.grey)};
    color: #333;
    font-size: 8px;
    line-height: 9px;
    white-space: pre;
`;
const LabelCell = styled(BodyCell)`
    && {
        padding-left: 0;
    }
    border-left: 1px solid #d0d3d3;
    font-weight: 700;
`;
const Typo = styled.span`
    text-decoration: underline wavy #e04545 1px;
    text-decoration-skip-ink: none;
    text-underline-offset: -1px;
`;
const Circled = styled.span`
    font-family: "Noto Sans CJK JP", sans-serif;
    font-size: 10px;
    line-height: 1px;
`;
const VerticalScroll = styled.div`
    width: 9px;
    padding: 3px 2px 0;
    border-top: 2px solid #555;
    background-color: #cecece;
    i {
        display: block;
        width: 5px;
        height: 36%;
        border-radius: 3px;
        background-color: #7f7f7f;
    }
`;
const HorizontalScroll = styled.div`
    height: 10px;
    flex-shrink: 0;
    margin-right: 9px;
    padding: 2px 0 0 2px;
    border-right: 2px solid #777;
    background-color: #cecece;
    i {
        display: block;
        width: 47%;
        height: 6px;
        border-radius: 3px;
        background-color: #7f7f7f;
    }
`;
const TabBar = styled.div`
    display: flex;
    flex-shrink: 0;
    height: 16px;
`;
const TabNav = styled.div`
    display: flex;
    width: 75px;
    padding-left: 5px;
    button {
        display: flex;
        align-items: center;
        width: 15px;
    }
`;
const AddSheet = styled.button`
    display: flex;
    align-items: center;
    width: 17px;
`;
const SheetTab = styled.button`
    min-width: ${(p) => p.$sheet.width}px;
    border-bottom: 2px solid ${(p) => (p.$active ? "#26b862" : p.$sheet.bg)};
    background-color: ${(p) => p.$sheet.bg};
    color: ${(p) => p.$sheet.color};
    font-weight: ${(p) => (p.$active ? 700 : 400)};
    line-height: 14px;
`;
const Sidebar = styled.aside`
    position: relative;
    display: flex;
    flex-direction: column;
    align-items: center;
    gap: 5px;
    width: 38px;
    padding-top: 3px;
`;
const SideButton = styled.button`
    display: flex;
    align-items: center;
    justify-content: center;
    width: 24px;
    height: 24px;
    &:nth-of-type(2) {
        margin-bottom: 1px;
    }
`;
const Grip = styled.button`
    position: absolute;
    left: -1px;
    top: 46%;
    display: flex;
    align-items: center;
    width: 5px;
    height: 50px;
    background-color: #8f8f8f;
`;
const StatusBar = styled.footer`
    display: flex;
    align-items: center;
    height: 17px;
    border-top: 1px solid ${Colors.line};
    line-height: 14px;
`;
const Status = styled.div`
    display: flex;
    align-items: center;
    justify-content: ${(p) => (p.$center ? "center" : "flex-start")};
    gap: 7px;
    flex: ${(p) => (p.$grow ? "1" : `0 0 ${p.$width}px`)};
    height: 13px;
    padding-left: ${(p) => (p.$center ? "0" : "6px")};
    border-right: 1px solid #e6e4e2;
    white-space: nowrap;
`;
const Zoom = styled.div`
    display: flex;
    align-items: center;
    gap: 3px;
    width: 128px;
    padding-left: 5px;
    button {
        display: flex;
    }
    input {
        appearance: none;
        width: 65px;
        height: 10px;
    }
    input::-webkit-slider-runnable-track {
        height: 1px;
        background-color: #9a9a9a;
    }
    input::-webkit-slider-thumb {
        appearance: none;
        width: 3px;
        height: 7px;
        margin-top: -3px;
        border: 1px solid #555;
        background-color: #eee;
    }
    span {
        margin-left: 7px;
    }
`;
export default App;
